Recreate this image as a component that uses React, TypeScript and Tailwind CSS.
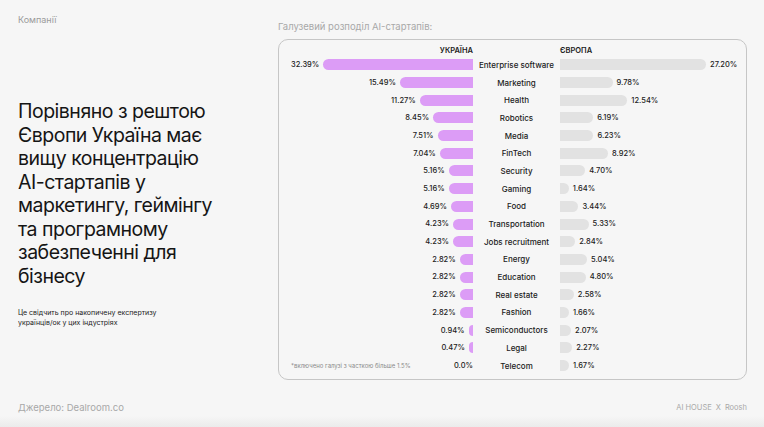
import React from 'react';

const rows: [string, number, number][] = [
  ['Enterprise software', 32.39, 27.2],
  ['Marketing', 15.49, 9.78],
  ['Health', 11.27, 12.54],
  ['Robotics', 8.45, 6.19],
  ['Media', 7.51, 6.23],
  ['FinTech', 7.04, 8.92],
  ['Security', 5.16, 4.7],
  ['Gaming', 5.16, 1.64],
  ['Food', 4.69, 3.44],
  ['Transportation', 4.23, 5.33],
  ['Jobs recruitment', 4.23, 2.84],
  ['Energy', 2.82, 5.04],
  ['Education', 2.82, 4.8],
  ['Real estate', 2.82, 2.58],
  ['Fashion', 2.82, 1.66],
  ['Semiconductors', 0.94, 2.07],
  ['Legal', 0.47, 2.27],
  ['Telecom', 0, 1.67],
];

const headline = [
  'Порівняно з рештою',
  'Європи Україна має',
  'вищу концентрацію',
  'AI-стартапів у',
  'маркетингу, геймінгу',
  'та програмному',
  'забезпеченні для',
  'бізнесу',
];

const fmt = (v: number) => (v === 0 ? '0.0%' : `${v.toFixed(2)}%`);

const Row = ({ label, ua, eu, last }: { label: string; ua: number; eu: number; last: boolean }) => (
  <div className="flex h-[17.7px] items-center">
    <div className="flex w-[182px] items-center justify-end">
      {last && (
        <span className="mr-auto text-[6px] text-[#8a8a8a]">*включено галузі з часткою більше 1.5%</span>
      )}
      <span className="text-[7.5px] font-medium text-[#1c1c1c]">{fmt(ua)}</span>
      {ua > 0 && (
        <div className="ml-[4px] h-[11px] rounded-l-full bg-[#dc9cf6]" style={{ width: Math.max(ua * 4.72, 4) }} />
      )}
    </div>
    <div className="w-[87px] text-center text-[8px] font-medium text-[#1c1c1c]">{label}</div>
    <div className="flex items-center">
      <div className="h-[11px] rounded-r-full bg-[#e2e2e2]" style={{ width: eu * 5.37 }} />
      <span className="ml-[4px] text-[7.5px] font-medium text-[#1c1c1c]">{fmt(eu)}</span>
    </div>
  </div>
);

export default function App() {
  return (
    <div className="flex h-[427px] w-[764px] flex-col overflow-hidden bg-[#f6f6f6] font-['Inter',sans-serif] text-[#151515]">
      <div className="flex h-[380px] pl-[18px] pr-[17px]">
        <div className="w-[260px]">
          <div className="mt-[14px] text-[9px] leading-[12px] text-[#9b9b9b]">Компанії</div>
          <h1 className="mt-[74px] text-[19.5px] leading-[23.5px] font-normal tracking-[-0.5px]">
            {headline.map((l) => (
              <div key={l}>{l}</div>
            ))}
          </h1>
          <p className="mt-[20px] text-[7px] leading-[10px] text-[#222]">
            Це свідчить про накопичену експертизу
            <br />
            українців/ок у цих індустріях
          </p>
        </div>
        <div className="flex-1">
          <div className="mt-[21px] text-[9.5px] leading-[12px] text-[#a8a8a8]">Галузевий розподіл AI-стартапів:</div>
          <div className="mt-[6px] h-[341px] rounded-[10px] border border-[#c6c6c6] pl-[12px] pt-[6px]">
            <div className="flex text-[7.5px] leading-[10px] font-semibold text-[#1c1c1c]">
              <div className="w-[182px] text-right">УКРАЇНА</div>
              <div className="w-[87px]" />
              <div>ЄВРОПА</div>
            </div>
            {rows.map(([l, u, e], i) => (
              <Row key={l} label={l} ua={u} eu={e} last={i === rows.length - 1} />
            ))}
          </div>
        </div>
      </div>
      <div className="mt-[22px] flex items-center justify-between pl-[18px] pr-[17px] leading-[12px] text-[#a8a8a8]">
        <span className="text-[9.5px]">Джерело: Dealroom.co</span>
        <span className="flex gap-[4px] text-[7.5px]">
          <span>AI HOUSE</span>
          <span>X</span>
          <span>Roosh</span>
        </span>
      </div>
      <div className="mt-auto h-[11px] bg-gradient-to-b from-[#f6f6f6] to-[#ebebeb]" />
    </div>
  );
}
